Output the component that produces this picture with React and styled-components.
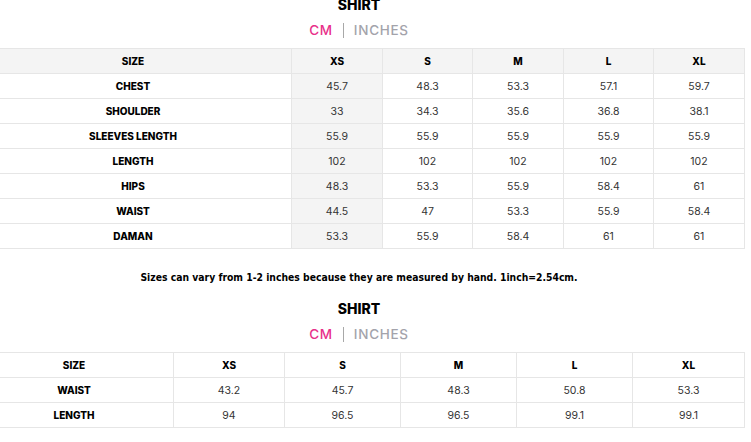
import React from "react";
import styled, { createGlobalStyle } from "styled-components";

const GlobalStyle = createGlobalStyle`
    html, body {
        margin: 0;
        padding: 0;
        background: #FFFFFF;
        overflow: hidden;
    }
    body {
        font-family: 'Inter', 'Liberation Sans', sans-serif;
    }
`

const SIZES = ["XS", "S", "M", "L", "XL"];

const shirtTop = {
    cols: [317, 91, 90, 91, 90, 91],
    shaded: true,
    rows: [
        ["CHEST", "45.7", "48.3", "53.3", "57.1", "59.7"],
        ["SHOULDER", "33", "34.3", "35.6", "36.8", "38.1"],
        ["SLEEVES LENGTH", "55.9", "55.9", "55.9", "55.9", "55.9"],
        ["LENGTH", "102", "102", "102", "102", "102"],
        ["HIPS", "48.3", "53.3", "55.9", "58.4", "61"],
        ["WAIST", "44.5", "47", "53.3", "55.9", "58.4"],
        ["DAMAN", "53.3", "55.9", "58.4", "61", "61"],
    ],
};

const shirtBottom = {
    cols: [199, 111, 116, 116, 116, 112],
    shaded: false,
    rows: [
        ["WAIST", "43.2", "45.7", "48.3", "50.8", "53.3"],
        ["LENGTH", "94", "96.5", "96.5", "99.1", "99.1"],
    ],
};

function SizeTable({ chart }) {
    return (
        <Table>
            <colgroup>
                {chart.cols.map((w, i) => (
                    <col key={i} style={{ width: w }} />
                ))}
            </colgroup>
            <thead>
                <HeadRow shaded={chart.shaded}>
                    <HeadCell>SIZE</HeadCell>
                    {SIZES.map((s, i) => (
                        <HeadCell key={s} shaded={chart.shaded && i === 0}>{s}</HeadCell>
                    ))}
                </HeadRow>
            </thead>
            <tbody>
                {chart.rows.map((row) => (
                    <tr key={row[0]}>
                        <LabelCell>{row[0]}</LabelCell>
                        {row.slice(1).map((v, i) => (
                            <ValueCell key={i} shaded={chart.shaded && i === 0}>{v}</ValueCell>
                        ))}
                    </tr>
                ))}
            </tbody>
        </Table>
    )
}

function Heading() {
    return (
        <HeadingBox>
            <Title>SHIRT</Title>
            <Units>
                <Unit active>CM</Unit>
                <Divider />
                <Unit>INCHES</Unit>
            </Units>
        </HeadingBox>
    )
}

export default function App() {
    return (
        <>
            <GlobalStyle />
            <Page>
                <Heading />
                <SizeTable chart={shirtTop} />
                <Note>Sizes can vary from 1-2 inches because they are measured by hand. 1inch=2.54cm.</Note>
                <Heading />
                <SizeTable chart={shirtBottom} />
            </Page>
        </>
    )
}

const Page = styled.div`
    width: 770px;
    margin-left: -26px;
    margin-top: -5px;
    display: flex;
    flex-direction: column;
`

const HeadingBox = styled.div`
    display: flex;
    flex-direction: column;
    align-items: center;
`

const Title = styled.div`
    font-family: 'Inter', sans-serif;
    font-weight: 800;
    font-size: 14px;
    line-height: 20px;
    color: #000000;
`

const Units = styled.div`
    display: flex;
    align-items: center;
    gap: 10px;
    margin-top: 7px;
    margin-bottom: 10px;
    height: 16px;
`

const Unit = styled.span`
    font-family: 'Inter', sans-serif;
    font-size: 13.5px;
    font-weight: 500;
    letter-spacing: 0.7px;
    color: ${props => props.active ? '#E8318A' : '#A3A3AB'};
`

const Divider = styled.span`
    width: 1px;
    height: 15px;
    background-color: #A8A8A8;
`

const Table = styled.table`
    width: 770px;
    table-layout: fixed;
    border-collapse: collapse;
`

const HeadRow = styled.tr`
    background-color: ${props => props.shaded ? '#F4F4F4' : '#FFFFFF'};
`

const Cell = styled.td`
    height: 24px;
    padding: 0;
    border: 1px solid #E6E6E6;
    text-align: center;
    vertical-align: middle;
    background-color: ${props => props.shaded ? '#F4F4F4' : 'transparent'};
`

const HeadCell = styled(Cell).attrs({ as: 'th' })`
    font-family: 'Inter', sans-serif;
    font-weight: 800;
    font-size: 10px;
    color: #000000;
`

const LabelCell = styled(Cell)`
    font-family: 'Inter', sans-serif;
    font-weight: 800;
    font-size: 10px;
    color: #000000;
`

const ValueCell = styled(Cell)`
    font-family: 'Inter', sans-serif;
    font-weight: 400;
    font-size: 10.5px;
    color: #333333;
`

const Note = styled.p`
    margin: 22px 0 16px;
    text-align: center;
    font-family: 'DejaVu Sans Condensed', 'DejaVu Sans', Verdana, sans-serif;
    font-stretch: condensed;
    font-weight: 700;
    font-size: 10.3px;
    color: #000000;
`
